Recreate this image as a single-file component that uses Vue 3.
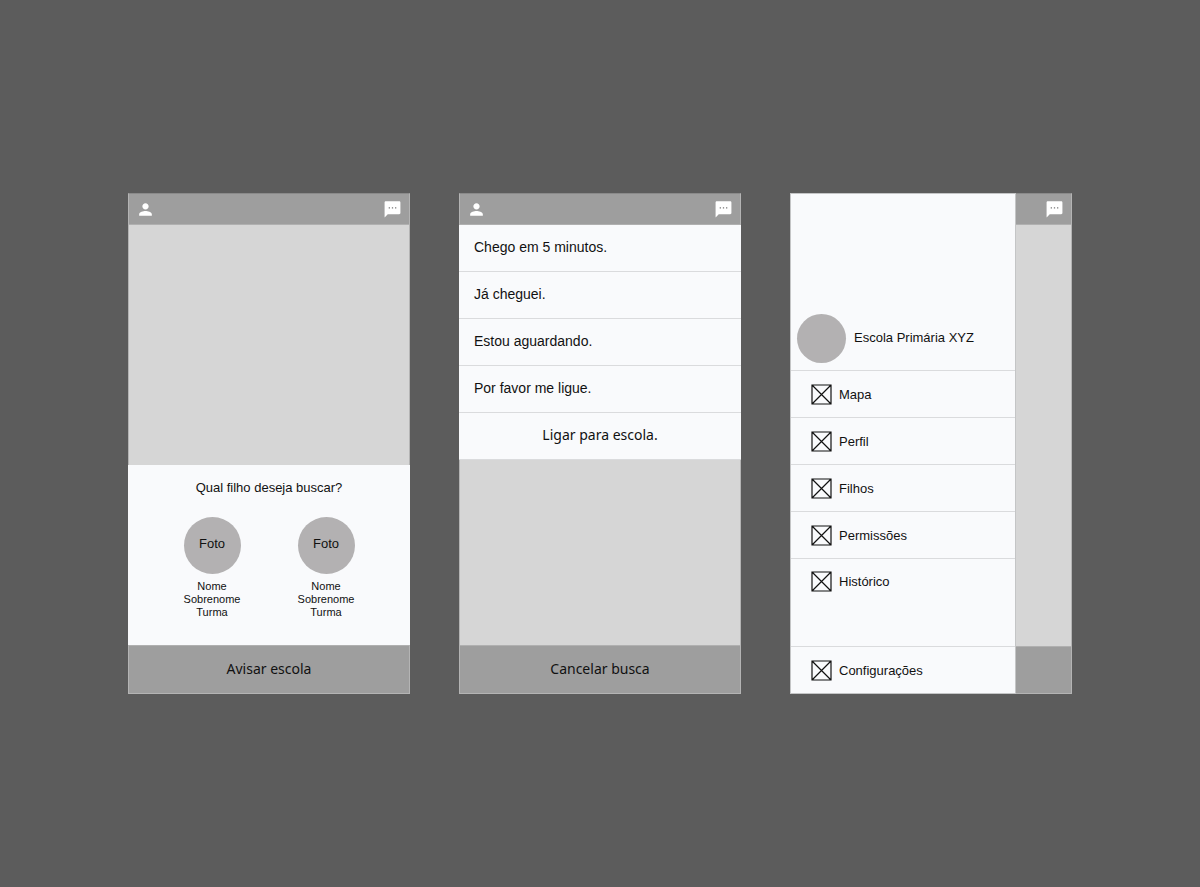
<script setup>
import { h } from 'vue'

const messages = ['Chego em 5 minutos.', 'Já cheguei.', 'Estou aguardando.', 'Por favor me ligue.']
const children = [1, 2]
const links = ['Mapa', 'Perfil', 'Filhos', 'Permissões', 'Histórico', 'Configurações']

const PersonIcon = () =>
  h('svg', { viewBox: '0 0 24 24', width: 19, height: 19, fill: '#fff', 'aria-hidden': 'true' }, [
    h('path', { d: 'M12 12c2.2 0 4-1.8 4-4s-1.8-4-4-4-4 1.8-4 4 1.8 4 4 4zm0 2c-2.7 0-8 1.3-8 4v2h16v-2c0-2.7-5.3-4-8-4z' })
  ])

const ChatIcon = () =>
  h('svg', { viewBox: '0 0 24 24', width: 19, height: 19, 'aria-hidden': 'true' }, [
    h('path', { fill: '#fff', d: 'M20.500 1.500H3.500c-.8 0-1.500.7-1.500 1.500v19l4-4h14.500c.8 0 1.500-.7 1.500-1.500V3c0-.8-.7-1.500-1.500-1.500z' }),
    h('path', { fill: '#777', d: 'M7.200 9h1.600v1.600H7.200zM11.200 9h1.600v1.600h-1.600zM15.200 9h1.600v1.600h-1.600z' })
  ])

const BoxIcon = () =>
  h('svg', { viewBox: '0 0 21 21', width: 21, height: 21, fill: 'none', stroke: '#111', 'stroke-width': 1.2, 'aria-hidden': 'true' }, [
    h('path', { d: 'M1 1h19v19H1zM1 1l19 19M20 1L1 20' })
  ])
</script>

<template>
  <main class="board">
    <section class="phone">
      <header class="bar">
        <button class="icon" aria-label="Perfil"><PersonIcon /></button>
        <button class="icon" aria-label="Mensagens"><ChatIcon /></button>
      </header>
      <div class="map"></div>
      <div class="sheet">
        <h2 class="question">Qual filho deseja buscar?</h2>
        <div class="children">
          <button v-for="child in children" :key="child" class="child">
            <span class="photo">Foto</span>
            <span class="name">Nome<br />Sobrenome<br />Turma</span>
          </button>
        </div>
      </div>
      <button class="action">Avisar escola</button>
    </section>

    <section class="phone">
      <header class="bar">
        <button class="icon" aria-label="Perfil"><PersonIcon /></button>
        <button class="icon" aria-label="Mensagens"><ChatIcon /></button>
      </header>
      <div class="messages">
        <button v-for="message in messages" :key="message" class="message">{{ message }}</button>
        <button class="message call">Ligar para escola.</button>
      </div>
      <div class="map"></div>
      <button class="action">Cancelar busca</button>
    </section>

    <section class="split">
      <aside class="drawer">
        <div class="profile">
          <span class="avatar"></span>
          <span>Escola Primária XYZ</span>
        </div>
        <nav class="nav">
          <a v-for="link in links" :key="link" href="#" class="link">
            <BoxIcon />
            <span>{{ link }}</span>
          </a>
        </nav>
      </aside>
      <div class="phone behind">
        <header class="bar end">
          <button class="icon" aria-label="Mensagens"><ChatIcon /></button>
        </header>
        <div class="map"></div>
        <div class="action"></div>
      </div>
    </section>
  </main>
</template>

<style>
body {
  margin: 0;
  background: #5c5c5c;
}
</style>

<style scoped>
* {
  box-sizing: border-box;
}

.board {
  min-height: 100vh;
  padding: 24px 128px;
  display: grid;
  grid-template-columns: repeat(3, 1fr);
  gap: 49px;
  align-content: center;
  font-family: "Liberation Sans", Arial, sans-serif;
  font-size: 13px;
  color: #111;
}

button {
  margin: 0;
  padding: 0;
  border: 0;
  background: none;
  font: inherit;
  color: inherit;
  cursor: pointer;
}

svg {
  display: block;
  flex: none;
}

.phone {
  display: flex;
  flex-direction: column;
  border: 1px solid #b4b4b4;
  border-top-color: #8a8a8a;
}

.bar {
  height: 31px;
  padding: 0 7px;
  display: flex;
  align-items: center;
  justify-content: space-between;
  background: #9e9e9e;
  border-bottom: 1px solid #b0b0b0;
}

.bar.end {
  justify-content: flex-end;
}

.map {
  flex: 1;
  background: #d6d6d6;
}

.sheet {
  margin: 0 -1px;
  padding: 15px 32px 26px;
  background: #f9fafc;
}

.question {
  margin: 0 0 21px;
  font-size: 13px;
  font-weight: 400;
  line-height: 16px;
  text-align: center;
}

.children {
  display: flex;
  justify-content: center;
  gap: 57px;
}

.child {
  display: flex;
  flex-direction: column;
  align-items: center;
  gap: 6px;
}

.photo {
  width: 57px;
  height: 57px;
  padding-bottom: 4px;
  border-radius: 50%;
  display: flex;
  align-items: center;
  justify-content: center;
  background: #b3b1b2;
  line-height: 16px;
}

.name {
  font-size: 11px;
  line-height: 13px;
}

.action {
  height: 48px;
  padding-bottom: 2px;
  background: #9e9e9e;
  border-top: 1px solid #b0b0b0;
  font-family: "Noto Sans", sans-serif;
  font-size: 14px;
}

.messages {
  margin: 0 -1px;
  display: flex;
  flex-direction: column;
  background: #f9fafc;
}

.message {
  height: 47px;
  padding: 0 15px 2px;
  border-bottom: 1px solid #dadbdd;
  font-size: 14px;
  text-align: left;
}

.message.call {
  padding-bottom: 4px;
  font-family: "Noto Sans", sans-serif;
  text-align: center;
}

.split {
  display: grid;
  grid-template-columns: 4fr 1fr;
}

.drawer {
  display: flex;
  flex-direction: column;
  background: #f9fafc;
  border: 1px solid #c4c5c6;
}

.profile {
  height: 177px;
  padding: 0 6px 7px;
  display: flex;
  align-items: flex-end;
  gap: 8px;
  line-height: 47px;
  border-bottom: 1px solid #dadbdd;
}

.profile span:last-child {
  padding-bottom: 2px;
}

.avatar {
  width: 49px;
  height: 49px;
  border-radius: 50%;
  background: #b3b1b2;
}

.nav {
  flex: 1;
  display: flex;
  flex-direction: column;
}

.link {
  height: 47px;
  padding: 0 20px;
  display: flex;
  align-items: center;
  gap: 7px;
  border-bottom: 1px solid #dadbdd;
  color: inherit;
  text-decoration: none;
}

.link:nth-last-child(2) {
  height: 88px;
  padding-top: 12px;
  align-items: flex-start;
  line-height: 21px;
}

.link:last-child {
  height: 46px;
  border-bottom: 0;
}

.behind {
  border-left: 0;
}

.behind .action {
  height: 47px;
}
</style>
